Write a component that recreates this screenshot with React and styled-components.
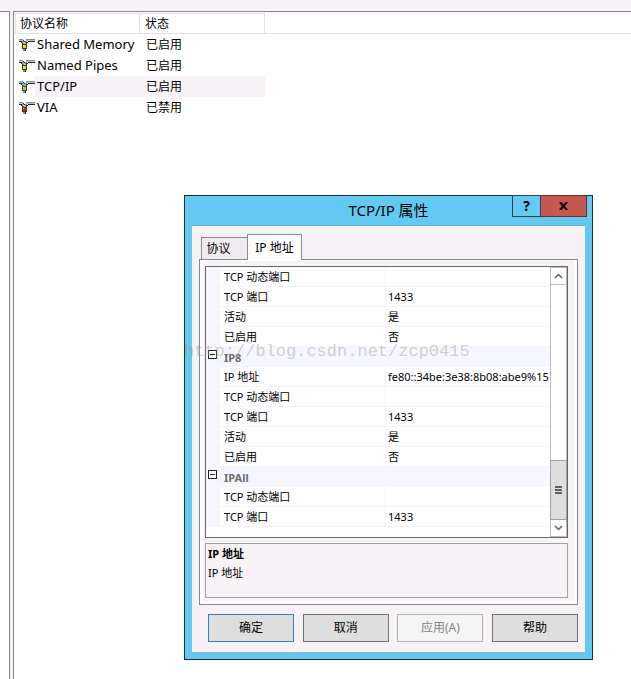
import React, { useState } from "react";
import styled, { createGlobalStyle } from "styled-components";

const protocols = [
  { name: "Shared Memory", status: "已启用", lamp: "#e6de00", wire: "#8a8a8a", shine: "#c4c4c4" },
  { name: "Named Pipes", status: "已启用", lamp: "#e6de00", wire: "#8a8a8a", shine: "#c4c4c4" },
  { name: "TCP/IP", status: "已启用", lamp: "#b4d020", wire: "#6c9cc4", shine: "#a4c8e4" },
  { name: "VIA", status: "已禁用", lamp: "#e81010", wire: "#8a8a8a", shine: "#c4c4c4" },
];

const settings = [
  { name: "TCP 动态端口", value: "" },
  { name: "TCP 端口", value: "1433" },
  { name: "活动", value: "是" },
  { name: "已启用", value: "否" },
  { group: "IP8" },
  { name: "IP 地址", value: "fe80::34be:3e38:8b08:abe9%15" },
  { name: "TCP 动态端口", value: "" },
  { name: "TCP 端口", value: "1433" },
  { name: "活动", value: "是" },
  { name: "已启用", value: "否" },
  { group: "IPAll" },
  { name: "TCP 动态端口", value: "" },
  { name: "TCP 端口", value: "1433" },
];

const ProtocolIcon = ({ lamp, wire, shine }) => (
  <svg width="16" height="12" viewBox="0 0 16 12" shapeRendering="crispEdges">
    <path d="M0 0h4v1H0zM7 0h9v1H7z" fill={wire} />
    <path d="M0 1h4v1H0zM7 1h9v1H7z" fill={shine} />
    <path d="M0 2h3v1H0zM9 2h7v1H9zM2 3h1v1H2zM8 3h1v1H8zM3 4h1v2H3zM7 4h1v2H7z" fill="#2a2a2a" />
    <path d="M3 2h2v1H3zM6 2h2v1H6zM3 3h1v1H3zM6 3h1v1H6zM4 4h1v2H4z" fill={wire} />
    <path d="M5 3h1v3H5zM4 3h1v1H4zM6 4h1v2H6z" fill={shine} />
    <path d="M4 1h1v1H4zM5 2h1v1H5zM7 3h1v1H7z" fill="#2a2a2a" />
    <path d="M3 5h5v5H3z" fill="#3e3c18" />
    <path d="M4 6h3v3H4z" fill={lamp} />
    <path d="M4 6h1v1H4z" fill="#fff" opacity="0.6" />
    <path d="M4 10h2v2H4z" fill={wire} />
    <path d="M6 10h1v2H6z" fill="#222" />
  </svg>
);

const App = () => {
  const [selected, setSelected] = useState(2);
  const [tab, setTab] = useState(1);

  return (
    <>
      <GlobalStyle />
      <Desktop>
        <SidePane />
        <ListPane>
          <ProtocolTable>
            <colgroup>
              <col width="125" />
              <col width="125" />
              <col />
            </colgroup>
            <thead>
              <tr>
                <HeadCell scope="col">协议名称</HeadCell>
                <HeadCell scope="col">状态</HeadCell>
                <HeadFill />
              </tr>
            </thead>
            <tbody>
              {protocols.map((p, idx) => (
                <tr key={p.name} onClick={() => setSelected(idx)}>
                  <NameCell>
                    <NameBox>
                      <ProtocolIcon lamp={p.lamp} wire={p.wire} shine={p.shine} />
                      <NameText $active={idx === selected}>{p.name}</NameText>
                    </NameBox>
                  </NameCell>
                  <StatusCell $active={idx === selected}>{p.status}</StatusCell>
                  <td />
                </tr>
              ))}
            </tbody>
          </ProtocolTable>
        </ListPane>

        <Dialog role="dialog" aria-labelledby="dialog-title">
          <TitleBar>
            <Title id="dialog-title">TCP/IP 属性</Title>
            <Caption>
              <CaptionButton aria-label="帮助主题">
                <b>?</b>
              </CaptionButton>
              <CaptionButton $close aria-label="关闭">
                <svg width="9" height="8" viewBox="0 0 9 8">
                  <path d="M1 0l7 8M8 0L1 8" stroke="#111" strokeWidth="2.4" />
                </svg>
              </CaptionButton>
            </Caption>
          </TitleBar>

          <Content>
            <Tabs role="tablist">
              {["协议", "IP 地址"].map((label, idx) => (
                <Tab
                  key={label}
                  role="tab"
                  aria-selected={tab === idx}
                  $active={tab === idx}
                  onClick={() => setTab(idx)}
                >
                  {label}
                </Tab>
              ))}
            </Tabs>

            <TabPanel role="tabpanel">
              <GridBox>
                <GridTable>
                  <colgroup>
                    <col width="14" />
                    <col width="166" />
                    <col />
                  </colgroup>
                  <tbody>
                    {settings.map((row, idx) =>
                      row.group ? (
                        <tr key={idx}>
                          <Gutter>
                            <Expander aria-label={row.group}>
                              <svg width="9" height="9" viewBox="0 0 9 9" shapeRendering="crispEdges">
                                <path d="M0 0h9v9H0zM1 1v7h7V1zM2 4h5v1H2z" fillRule="evenodd" fill="#222" />
                              </svg>
                            </Expander>
                          </Gutter>
                          <GroupCell colSpan="2">{row.group}</GroupCell>
                        </tr>
                      ) : (
                        <tr key={idx}>
                          <Gutter />
                          <KeyCell>{row.name}</KeyCell>
                          <ValueCell>{row.value}</ValueCell>
                        </tr>
                      )
                    )}
                  </tbody>
                </GridTable>
                <ScrollBar>
                  <ScrollButton aria-label="向上滚动">
                    <svg width="9" height="6" viewBox="0 0 9 6">
                      <path d="M1 5l3.5-3.5L8 5" fill="none" stroke="#606060" strokeWidth="1.5" />
                    </svg>
                  </ScrollButton>
                  <Track />
                  <Thumb>
                    <i />
                    <i />
                    <i />
                  </Thumb>
                  <ScrollButton aria-label="向下滚动">
                    <svg width="9" height="6" viewBox="0 0 9 6">
                      <path d="M1 1l3.5 3.5L8 1" fill="none" stroke="#606060" strokeWidth="1.5" />
                    </svg>
                  </ScrollButton>
                </ScrollBar>
              </GridBox>
              <Hint>
                <strong>IP 地址</strong>
                <span>IP 地址</span>
              </Hint>
            </TabPanel>

            <Footer>
              <Button $primary>确定</Button>
              <Button>取消</Button>
              <Button disabled>应用(A)</Button>
              <Button>帮助</Button>
            </Footer>
          </Content>
        </Dialog>

        <Watermark>http://blog.csdn.net/zcp0415</Watermark>
      </Desktop>
    </>
  );
};

const GlobalStyle = createGlobalStyle`
  * {
    box-sizing: border-box;
  }
  body {
    margin: 0;
    background: #f7f2f6;
    color: #000;
    font: 12px/20px "Noto Sans", "Noto Sans CJK SC", sans-serif;
  }
  button {
    font: inherit;
    color: inherit;
    padding: 0;
    border: 0;
    border-radius: 0;
  }
  svg {
    display: block;
  }
`;

const Desktop = styled.div`
  position: relative;
  display: flex;
  gap: 3px;
  min-height: 100vh;
  padding-top: 11px;
`;

const SidePane = styled.aside`
  width: 10px;
  background: #fff;
  border: 1px solid #868890;
  border-width: 1px 1px 0 0;
`;

const ListPane = styled.main`
  flex: 1;
  padding: 1px 0 0 1px;
  background: #fff;
  border: 1px solid #868890;
  border-width: 1px 0 0 1px;
`;

const ProtocolTable = styled.table`
  width: 100%;
  table-layout: fixed;
  border-spacing: 0;

  td {
    height: 21px;
    padding: 0;
  }
`;

const HeadCell = styled.th`
  height: 21px;
  padding: 0 5px;
  border: 1px solid #e2e2e2;
  border-left-width: 0;
  text-align: left;
  font-weight: normal;
  line-height: 19px;

  &:first-child {
    border-left-width: 1px;
    padding-left: 4px;
  }
`;

const HeadFill = styled.td`
  border-bottom: 1px solid #e2e2e2;
`;

const NameCell = styled.td`
  font-size: 13px;
`;

const NameBox = styled.div`
  display: flex;
  align-items: center;
  padding-left: 4px;
`;

const NameText = styled.span`
  flex: 1;
  padding-left: 2px;
  line-height: 21px;
  white-space: nowrap;
  background: ${(props) => (props.$active ? "#f7f2f6" : "none")};
`;

const StatusCell = styled.td`
  && {
    padding-left: 6px;
  }
  background: ${(props) => (props.$active ? "#f7f2f6" : "none")};
`;

const Dialog = styled.section`
  position: absolute;
  top: 195px;
  left: 184px;
  right: 38px;
  padding: 0 7px 6px;
  background: #62caf0;
  border: 1px solid #20303a;
`;

const TitleBar = styled.header`
  position: relative;
  height: 30px;
  border-bottom: 1px solid #69b0cd;
`;

const Title = styled.h1`
  margin: 0;
  font-size: 15px;
  font-weight: normal;
  line-height: 28px;
  text-align: center;
`;

const Caption = styled.div`
  position: absolute;
  top: -1px;
  right: -2px;
  display: flex;
`;

const CaptionButton = styled.button`
  display: flex;
  align-items: center;
  justify-content: center;
  width: ${(props) => (props.$close ? "46px" : "29px")};
  height: 22px;
  font-size: 14px;
  background: ${(props) => (props.$close ? "#c75850" : "#62caf0")};
  border: 1px solid ${(props) => (props.$close ? "#5c3033" : "#27404c")};
  border-left-width: ${(props) => (props.$close ? "0" : "1px")};
`;

const Content = styled.div`
  padding: 8px 7px 10px;
  background: #f7f2f6;
  border-bottom: 1px solid #8fb4c4;
`;

const Tabs = styled.div`
  display: flex;
  align-items: flex-end;
  padding-left: 2px;
`;

const Tab = styled.button`
  position: relative;
  width: ${(props) => (props.$active ? "55px" : "46px")};
  height: ${(props) => (props.$active ? "26px" : "22px")};
  margin-bottom: ${(props) => (props.$active ? "-1px" : "0")};
  padding-right: ${(props) => (props.$active ? "0" : "12px")};
  background: ${(props) => (props.$active ? "#fff" : "#f0ebef")};
  border: 1px solid #8a8c94;
  border-bottom: 0;
  border-right-width: ${(props) => (props.$active ? "1px" : "0")};
`;

const TabPanel = styled.div`
  display: flex;
  flex-direction: column;
  gap: 5px;
  padding: 6px 9px 6px 5px;
  background: #f7f2f6;
  border: 1px solid #868890;
  box-shadow: inset -3px -3px #fff, inset 3px 1px #fff;
`;

const GridBox = styled.div`
  display: flex;
  background: #fff;
  border: 1px solid #646668;
`;

const GridTable = styled.table`
  flex: 1;
  table-layout: fixed;
  border-spacing: 0;
  margin-bottom: 10px;
  font-size: 11px;
  line-height: 19px;

  td {
    height: 20px;
    padding: 0;
    white-space: nowrap;
  }
`;

const Gutter = styled.td`
  background: #f5f6fe;
  vertical-align: top;
`;

const Expander = styled.button`
  display: block;
  margin: 3px 0 0 2px;
  background: #fff;
`;

const KeyCell = styled.td`
  && {
    padding-left: 4px;
  }
  border: 1px solid #f4f4fc;
  border-width: 0 1px 1px 0;
`;

const ValueCell = styled.td`
  && {
    padding-left: 2px;
  }
  border-bottom: 1px solid #f4f4fc;
`;

const GroupCell = styled.td`
  && {
    padding: 1px 0 0 4px;
  }
  color: #6c6c6c;
  font-weight: bold;
  background: #f5f6fe;
`;

const ScrollBar = styled.div`
  display: flex;
  flex-direction: column;
  width: 17px;
  border: 1px solid #bcbcbc;
`;

const ScrollButton = styled.button`
  display: flex;
  align-items: center;
  justify-content: center;
  height: 16px;
  background: #fff;
`;

const Track = styled.div`
  flex: 1;
  border-top: 1px solid #bcbcbc;
`;

const Thumb = styled.div`
  display: flex;
  flex-direction: column;
  align-items: center;
  justify-content: center;
  gap: 1px;
  height: 60px;
  margin: 0 -1px;
  background: #dedede;
  border: 1px solid #a0a0a0;

  i {
    width: 7px;
    height: 2px;
    background: #606060;
  }
`;

const Hint = styled.div`
  display: flex;
  flex-direction: column;
  height: 55px;
  padding-left: 2px;
  font-size: 11px;
  line-height: 19px;
  border: 1px solid #a3a0a4;
`;

const Footer = styled.div`
  display: flex;
  justify-content: space-between;
  padding: 9px 0 0 9px;
`;

const Button = styled.button`
  width: 86px;
  height: 28px;
  background: #dedede;
  border: 1px solid ${(props) => (props.$primary ? "#3c7fb1" : "#707070")};

  &:disabled {
    color: #858585;
    background: #f5f5f5;
    border-color: #adb2b5;
  }
`;

const Watermark = styled.div`
  position: absolute;
  top: 342px;
  left: 184px;
  color: rgba(150, 150, 130, 0.42);
  font: 17px/20px "Liberation Mono", monospace;
  pointer-events: none;
`;

export default App;
